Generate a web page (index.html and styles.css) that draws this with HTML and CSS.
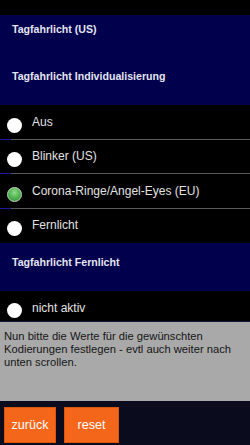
FILE: index.html
```html
<!DOCTYPE html>
<html>
<head>
<meta charset="utf-8">
<link rel="stylesheet" href="styles.css">
</head>
<body>
<div class="screen">
  <div class="topbar"></div>
  <div class="list">
    <div class="group-title">Tagfahrlicht (US)</div>
    <div class="section-title">Tagfahrlicht Individualisierung</div>
    <div class="row sep"><span class="radio"></span><span class="label">Aus</span></div>
    <div class="row sep"><span class="radio"></span><span class="label">Blinker (US)</span></div>
    <div class="row sep"><span class="radio checked"></span><span class="label">Corona-Ringe/Angel-Eyes (EU)</span></div>
    <div class="row"><span class="radio"></span><span class="label">Fernlicht</span></div>
    <div class="section-title">Tagfahrlicht Fernlicht</div>
    <div class="row last"><span class="radio"></span><span class="label">nicht aktiv</span></div>
  </div>
  <div class="info">Nun bitte die Werte für die gewünschten Kodierungen festlegen - evtl auch weiter nach unten scrollen.</div>
  <div class="toolbar">
    <button class="btn btn-back">zurück</button>
    <button class="btn btn-reset">reset</button>
  </div>
</div>
</body>
</html>
```

FILE: styles.css
```css
* { box-sizing: border-box; }
html, body { margin: 0; padding: 0; background: #000; }
body { font-family: "Liberation Sans", Arial, sans-serif; }
.screen { width: 250px; height: 445px; display: flex; flex-direction: column; overflow: hidden; }
.topbar { height: 15px; background: #000; flex: none; }
.list { flex: none; background: #000; }
.group-title {
  background: #00004c; color: #e4e4f0; font-weight: bold; font-size: 10.6px; line-height: 13px;
  height: 42px; padding: 8px 0 0 12px;
}
.section-title {
  background: #00004c; color: #e4e4f0; font-weight: bold; font-size: 10.6px; line-height: 13px;
  height: 48px; padding: 13px 0 0 12px;
}
.row {
  height: 34.5px; display: flex; align-items: flex-start; position: relative; background: #000;
}
.row.sep { border-bottom: 1px solid #5a5a5a; }
.row.sep::after {
  content: ""; position: absolute; left: 0; bottom: -1px; width: 11px; height: 1px; background: #1a1a9a;
}
.row.last { height: 31px; border-bottom: 1px solid #15153a; }
.radio {
  flex: none; width: 15px; height: 15px; border-radius: 50%; background: #fff;
  margin: 12.5px 0 0 7px;
}
.radio.checked {
  background: radial-gradient(circle at 50% 35%, #8fdc8a 0%, #4cb04c 55%, #2f8a30 100%);
  border: 1px solid #c9d6c9;
}
.label {
  color: #e2e2e2; font-size: 12px; line-height: 14px; margin: 9.5px 0 0 10px; white-space: nowrap;
}
.row.last .radio { margin-top: 12px; }
.row.last .label { margin-top: 10px; }
.info {
  height: 79px; flex: none; background: #a9a9a9; color: #161616; font-size: 11.2px; line-height: 13px;
  padding: 7.5px 4px 0 4px;
}
.toolbar {
  flex: 1; background: #0b0b1e; display: flex; gap: 8px; padding: 6px 0 0 4px; align-items: flex-start;
}
.btn {
  height: 36px; background: #f4661a; border: 1px solid #d9560f; color: #fff;
  font-family: "Liberation Sans", Arial, sans-serif; font-size: 12.5px; padding: 0; margin: 0;
}
.btn-back { width: 52px; }
.btn-reset { width: 55px; }
```
